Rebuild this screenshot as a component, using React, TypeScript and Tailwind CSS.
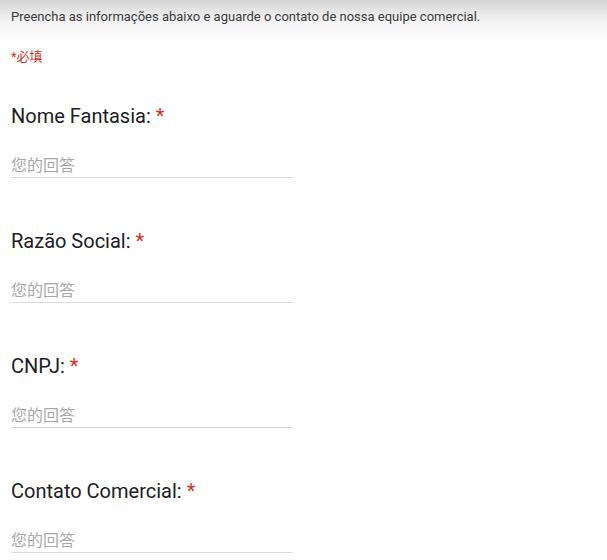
import React from "react";

const fields = ["Nome Fantasia:", "Razão Social:", "CNPJ:", "Contato Comercial:"];

export default function App() {
  return (
    <div
      className="w-[607px] h-[560px] overflow-hidden bg-white bg-[linear-gradient(to_bottom,#d6d6d6_0px,#f4f4f4_22px,#ffffff_42px)] px-[11px]"
      style={{ fontFamily: "Roboto, 'Noto Sans CJK SC', sans-serif" }}
    >
      <p className="pt-[9px] text-[13px] leading-[16px] text-[#3c3c3c]">
        Preencha as informações abaixo e aguarde o contato de nossa equipe comercial.
      </p>
      <p className="mt-[24px] text-[13px] leading-[16px] text-[#d93025]">*必填</p>
      <div className="mt-[39px] flex flex-col gap-[51px]">
        {fields.map((f) => (
          <div key={f} className="flex flex-col">
            <div className="text-[20px] leading-[24px] text-[#202124]">
              {f} <span className="text-[#d93025]">*</span>
            </div>
            <div className="mt-[25px] pt-[2px] w-[282px] border-b border-[#dadce0] text-[16px] leading-[22px] text-[#a8a8a8]">
              您的回答
            </div>
          </div>
        ))}
      </div>
    </div>
  );
}
